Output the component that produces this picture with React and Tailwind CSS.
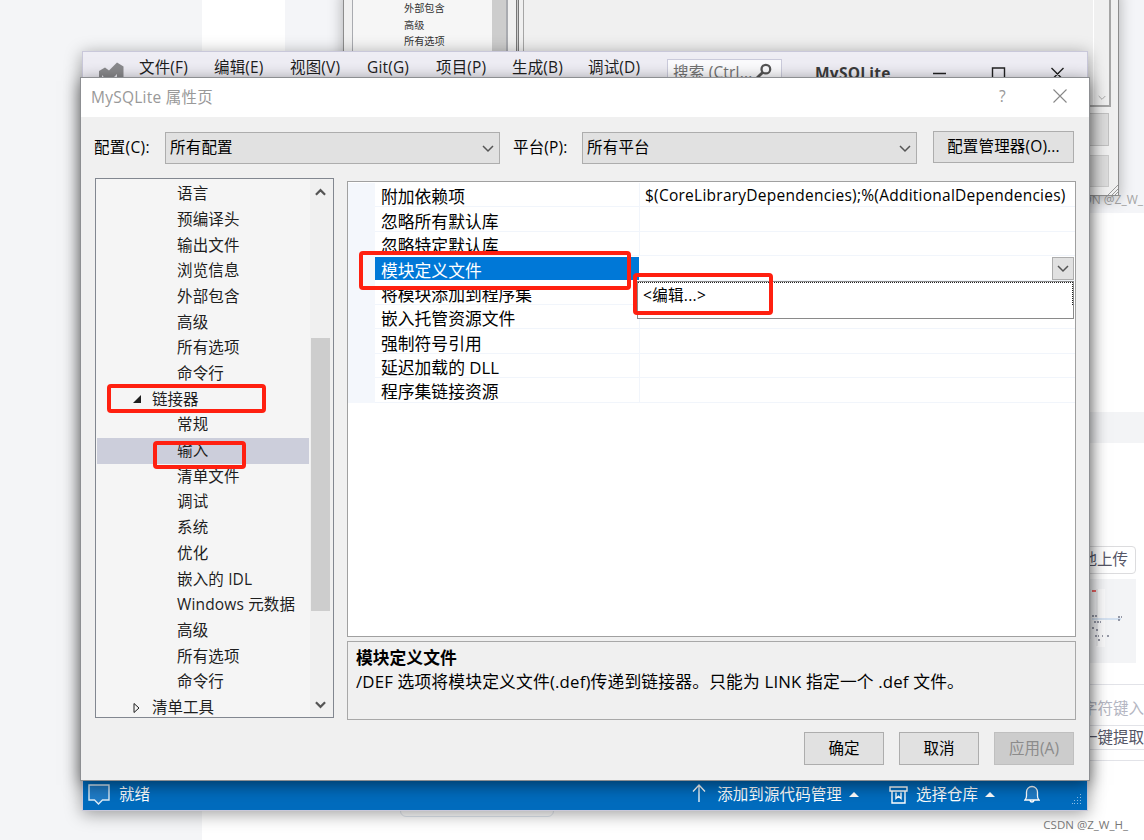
import React from "react";

const TREE = [
  "语言",
  "预编译头",
  "输出文件",
  "浏览信息",
  "外部包含",
  "高级",
  "所有选项",
  "命令行",
  { label: "链接器", open: true },
  "常规",
  { label: "输入", selected: true },
  "清单文件",
  "调试",
  "系统",
  "优化",
  "嵌入的 IDL",
  "Windows 元数据",
  "高级",
  "所有选项",
  "命令行",
  { label: "清单工具", open: false },
];

const PROPS = [
  ["附加依赖项", "$(CoreLibraryDependencies);%(AdditionalDependencies)"],
  ["忽略所有默认库", ""],
  ["忽略特定默认库", ""],
  ["模块定义文件", ""],
  ["将模块添加到程序集", ""],
  ["嵌入托管资源文件", ""],
  ["强制符号引用", ""],
  ["延迟加载的 DLL", ""],
  ["程序集链接资源", ""],
];

const MENU = [
  ["文件(F)", "w-[75px]"],
  ["编辑(E)", "w-[76px]"],
  ["视图(V)", "w-[77px]"],
  ["Git(G)", "w-[69px]"],
  ["项目(P)", "w-[76px]"],
  ["生成(B)", "w-[76px]"],
  ["调试(D)", "w-[79px]"],
];

const Chevron = ({ className, up, bold }) => (
  <svg
    viewBox="0 0 12 8"
    className={className}
    fill="none"
    stroke="currentColor"
    strokeWidth={bold ? 2.4 : 1.5}
  >
    <path d={up ? "M1 7l5-5 5 5" : "M1 1l5 5 5-5"} />
  </svg>
);

const Select = ({ children }) => (
  <div className="flex h-8 w-[335px] items-center justify-between border border-[#adadad] bg-[#e1e1e1] pr-[5px] pl-1">
    <span className="mt-px tracking-[0.2px]">{children}</span>
    <Chevron className="mt-0.5 h-2 w-3 text-[#555]" />
  </div>
);

const Button = ({ children, disabled }) => (
  <div
    className={
      disabled
        ? "flex h-[33px] w-20 items-center justify-center border border-[#bfbfbf] bg-[#cccccc] text-[#8b8b8b]"
        : "flex h-[33px] w-20 items-center justify-center border border-[#adadad] bg-[#e1e1e1]"
    }
  >
    {children}
  </div>
);

const Page = () => (
  <div className="absolute inset-0 bg-white">
    <div className="absolute inset-y-0 left-0 w-[202px] bg-[#f4f5f7]"></div>
    <div className="absolute top-0 right-0 h-[213px] w-[859px] bg-[#f4f5f8]"></div>
    <div className="absolute top-[412px] right-0 h-[31px] w-[80px] bg-[#f3f4f6]"></div>
    <div className="absolute top-[780px] left-[400px] h-[37px] w-[154px] rounded-md border border-[#dfe6ee]"></div>
    <div className="absolute top-[191px] right-[1px] h-[18px] text-[12px] leading-[18px] text-[#a5a5a5] whitespace-nowrap">
      CSDN @Z_W_
    </div>
    <div className="absolute top-[546px] right-2 flex h-7 w-24 items-center justify-end rounded-sm border border-[#dcdcde] pr-[7px] text-[15.5px] text-[#555666]">
      本地上传
    </div>
    <div className="absolute top-[579px] right-2 h-[84px] w-24 bg-[#f3f4f6]">
      <svg viewBox="0 0 48 84" className="absolute right-0 h-[84px] w-12">
        <rect x="9" y="10" width="8" height="58" fill="#fafafb" />
        <path d="M9 10v57M2 10v50" stroke="#dcdde2" />
        <path d="M4 40h29" stroke="#b4cdea" />
        <path
          d="M4 37h6M6 43h7M30 38h4M30 41h3M4 49h3M8 51h3M7 57h4M10 61h2M14 57h1M19 57h3"
          stroke="#77798a"
          strokeWidth="1.5"
          strokeDasharray="2 1"
        />
        <path d="M4 12h4" stroke="#e66" strokeWidth="2" />
      </svg>
    </div>
    <div className="absolute top-[684px] right-0 flex h-[77px] w-24 flex-col border-y border-[#e2e3e8] text-[15.5px] leading-[24px] whitespace-nowrap">
      <div className="flex h-[40px] items-center pt-[6px] pl-[34px] text-[#b4b6c2]">
        字符键入
      </div>
      <div className="flex h-[25px] items-center border-y border-[#e2e3e8] pb-[2px] pl-[34px] text-[#555666]">
        一键提取
      </div>
    </div>
  </div>
);

const BackDialog = () => (
  <div className="absolute -top-3 left-[343px] h-[208px] w-[776px] border border-[#8c8c8c] bg-[#f0f0f0] shadow-[0_3px_14px_rgba(0,0,0,0.3)]">
    <div className="flex h-[118px]">
      <div className="ml-2 flex w-[156px] border-r-2 border-l border-[#a9abb0] bg-[#f6f6f6]">
        <div className="flex flex-1 flex-col pt-[11px] pl-[51px] text-[10.2px] leading-[16.7px] text-[#333]">
          <span>外部包含</span>
          <span>高级</span>
          <span>所有选项</span>
        </div>
        <div className="w-3.5 bg-[#cdcdcd]"></div>
      </div>
      <div className="ml-2 w-[3px] border-x border-[#777] bg-[#ccc]"></div>
      <div className="mr-[7px] ml-1 flex flex-1 justify-end border-r-2 border-b-2 border-l border-[#a5a5a5]">
        <div className="flex w-4 items-end justify-center border-l border-white pb-1 text-[#aaa]">
          <Chevron className="h-[6px] w-2" />
        </div>
      </div>
    </div>
    <div className="mt-[6px] mr-[9px] ml-auto h-[33px] w-20 border border-[#c0c0c0] bg-[#dcdcdc]"></div>
    <div className="mt-[9px] mr-[9px] ml-auto h-8 w-20 border border-[#cacaca] bg-[#dcdcdc]"></div>
    <svg
      viewBox="0 0 10 10"
      className="absolute right-0 bottom-0 size-[10px]"
      stroke="#999"
    >
      <path d="M0 10L10 0M4 10l6-6M7 10l3-3" />
    </svg>
  </div>
);

const VsWindow = () => (
  <div className="absolute top-[51px] left-[82px] flex h-[760px] w-[1006px] flex-col justify-between border border-[#c9c8da] bg-[#eeedf4] shadow-[0_3px_16px_rgba(0,0,0,0.38)]">
    <div className="flex h-10 text-[15.5px] text-[#1e1e1e]">
      <svg viewBox="0 0 26 26" className="mt-[10px] ml-[15px] size-[26px]">
        <path
          d="M1 9l6-3.500 4 3L19 .5l6.500 4V26H1zM4 13v9l4-4.500zM19 12L14 17l5 5z"
          fill="#8a8a8d"
          fillRule="evenodd"
        />
      </svg>
      <div className="ml-[15px] flex h-[31px] items-center tracking-[0.15px]">
        {MENU.map(([label, width]) => (
          <span key={label} className={width}>
            {label}
          </span>
        ))}
      </div>
      <div className="mt-[7px] flex h-8 w-[115px] shrink-0 border border-[#cbcbdc] bg-[#fbfbfd] pl-[5px] leading-[25px] text-[#717171]">
        <span className="tracking-[0.2px] whitespace-nowrap">搜索 (Ctrl...</span>
        <svg
          viewBox="0 0 18 18"
          className="mt-[3px] ml-0.5 size-[17px] shrink-0"
          fill="none"
          stroke="#555"
          strokeWidth="2.4"
        >
          <circle cx="11.5" cy="6.5" r="4.6" />
          <path d="M8 10l-7 7" strokeWidth="3" />
        </svg>
      </div>
      <span className="mt-[7px] ml-[33px] w-[78px] font-bold leading-[28px] tracking-[0.25px] text-[#3b3b3b]">
        MySQLite
      </span>
      <svg
        viewBox="0 0 132 16"
        className="mt-[14px] ml-10 h-4 w-[132px] shrink-0"
        fill="none"
        stroke="#222"
        strokeWidth="1.4"
      >
        <path d="M0 7.500h13M59.500 2h12v13h-12zM118.500 2l12 12M130.500 2l-12 12" />
      </svg>
    </div>
    <div className="flex h-[30px] items-center bg-[#006cbe] text-[15.5px] text-white">
      <svg
        viewBox="0 0 22 22"
        className="mb-0.5 ml-[5px] size-[22px]"
        fill="#1f7cc7"
        stroke="#dcebf7"
        strokeWidth="1.4"
      >
        <path d="M1 2h20v15h-6.500l-4 4-4-4H1z" />
      </svg>
      <span className="ml-[9px]">就绪</span>
      <svg
        viewBox="0 0 14 18"
        className="mb-1 ml-auto h-[18px] w-3.5"
        fill="none"
        stroke="#fff"
        strokeWidth="1.3"
      >
        <path d="M7 18V1M1 7.500L7 1l6 6.500" />
      </svg>
      <span className="ml-[11px] tracking-[0.1px]">添加到源代码管理</span>
      <svg viewBox="0 0 10 5" className="mb-0.5 ml-[7px] h-[5px] w-[10px]">
        <path d="M0 5l5-5 5 5z" fill="#fff" />
      </svg>
      <svg
        viewBox="0 0 19 18"
        className="mb-px ml-[30px] h-[18px] w-[19px]"
        fill="none"
        stroke="#fff"
        strokeWidth="1.4"
      >
        <path d="M1 1h17v4H1zM3 5v12h13V5M7 6.500v6l2.500-2.300 2.500 2.300v-6" />
      </svg>
      <span className="ml-[8px]">选择仓库</span>
      <svg viewBox="0 0 10 5" className="mb-0.5 ml-[7px] h-[5px] w-[10px]">
        <path d="M0 5l5-5 5 5z" fill="#fff" />
      </svg>
      <svg
        viewBox="0 0 16 18"
        className="mb-0.5 ml-[29px] h-[18px] w-4"
        fill="#1f7cc7"
        stroke="#fff"
        strokeWidth="1.3"
      >
        <path d="M1 15c1-1 1.500-2 1.500-4V7a5.500 5.500 0 0 1 11 0v4c0 2 .5 3 1.500 4zM6 15.500c.5 2 3.500 2 4 0" />
      </svg>
      <svg
        viewBox="0 0 10 10"
        className="mt-2 mr-[5px] ml-8 size-[10px]"
        fill="#8fc0e6"
      >
        <path d="M8 0h1v1H8zM5 3h1v1H5zM8 3h1v1H8zM2 6h1v1H2zM5 6h1v1H5zM8 6h1v1H8zM0 9h1v1H0zM2 9h1v1H2zM5 9h1v1H5zM8 9h1v1H8z" />
      </svg>
    </div>
  </div>
);

const TreeRow = ({ item }) => {
  const row = typeof item === "string" ? { label: item } : item;
  const group = row.open !== undefined;
  return (
    <div
      className={
        row.selected
          ? "flex h-[25.7px] shrink-0 items-center bg-[#cccedb]"
          : "flex h-[25.7px] shrink-0 items-center"
      }
    >
      {group && (
        <svg viewBox="0 0 10 12" className="ml-[35px] h-3 w-[10px]">
          {row.open ? (
            <path d="M9 2v8H1z" fill="#1e1e1e" />
          ) : (
            <path d="M2 1.500v9L7 6z" fill="none" stroke="#1e1e1e" />
          )}
        </svg>
      )}
      <span className={group ? "ml-[10px]" : "ml-20 tracking-[0.15px]"}>
        {row.label}
      </span>
    </div>
  );
};

const Tree = () => (
  <div className="flex h-[540px] w-[239px] border border-[#828790] bg-[#f5f5f5] pl-px text-[#1e1e1e]">
    <div className="flex h-[538px] flex-1 flex-col overflow-hidden pt-0.5 pr-px whitespace-nowrap">
      {TREE.map((item, i) => (
        <TreeRow key={i} item={item} />
      ))}
    </div>
    <div className="flex w-[23px] flex-col items-center bg-[#f0f0f0] pt-px pr-[3px] text-[#555]">
      <Chevron up bold className="mt-2 h-2 w-[11px]" />
      <div className="mt-[142px] h-[273px] w-[19px] bg-[#cdcdcd]"></div>
      <Chevron bold className="mt-auto mb-2 h-2 w-[11px]" />
    </div>
  </div>
);

const PropertyGrid = () => (
  <div className="relative h-[456px] w-[729px] border border-[#a0a0a0] bg-white pt-px text-[16.8px]">
    {PROPS.map(([name, value], i) => (
      <div key={name} className="flex h-[24.4px]">
        <div className="w-[27px] bg-[#f4f7fc]"></div>
        <div
          className={
            i === 3
              ? "mt-px flex h-[23px] w-[264px] items-center bg-[#0078d7] pt-1 pl-[6px] text-white"
              : "flex w-[265px] items-center border-r border-b border-[#f1f5fb] pt-[5px] pl-[6px]"
          }
        >
          <span className="leading-[24px] whitespace-nowrap">{name}</span>
        </div>
        <div className="flex flex-1 items-center border-b border-[#f1f5fb] pt-px pl-[5px]">
          <span className="text-[15.5px] leading-[24px] tracking-[0.25px] whitespace-nowrap">
            {value}
          </span>
          {i === 3 && (
            <div className="mr-px ml-auto flex h-[23px] w-[22px] items-center justify-center border border-[#adadad] bg-[#e1e1e1]">
              <Chevron className="mt-0.5 h-2 w-3 text-[#555]" />
            </div>
          )}
        </div>
      </div>
    ))}
    <div className="absolute top-[99px] right-px h-[38px] w-[437px] border border-[#8a8a8a] bg-white">
      <div className="h-[23px] border-t border-r border-dotted border-[#222] pl-[5px] text-[15.5px] leading-[25px] tracking-[0.3px]">
        &lt;编辑...&gt;
      </div>
    </div>
  </div>
);

const PropertyDialog = () => (
  <div className="absolute top-[77px] left-[80px] h-[704px] w-[1010px] border border-[#8d8f92] bg-[#f0f0f0] text-[15.5px] text-black shadow-[0_4px_16px_rgba(0,0,0,0.5)]">
    <div className="flex h-[39px] items-center bg-white pb-px pl-[10px] text-[#999]">
      <span className="mt-px tracking-[0.25px]">MySQLite 属性页</span>
      <span className="ml-auto w-[9px]">?</span>
      <svg
        viewBox="0 0 14 14"
        className="mr-[22px] mb-0.5 ml-[45px] size-[14px]"
        stroke="#888"
        strokeWidth="1.1"
      >
        <path d="M.5.5l13 13M13.500.5l-13 13" />
      </svg>
    </div>
    <div className="mt-[14px] flex h-[33px] items-center pl-[13px]">
      <span className="w-[71px] tracking-[0.3px]">配置(C):</span>
      <Select>所有配置</Select>
      <span className="ml-[13px] w-[69px] tracking-[0.15px]">平台(P):</span>
      <Select>所有平台</Select>
      <div className="mb-[2px] ml-4 flex h-8 w-[141px] items-center justify-center border border-[#adadad] bg-[#e1e1e1] tracking-[0.15px]">
        配置管理器(O)...
      </div>
    </div>
    <div className="mt-[14px] flex pl-[14px]">
      <Tree />
      <div className="mt-[3px] ml-[13px] flex flex-col gap-1">
        <PropertyGrid />
        <div className="h-[79px] w-[729px] border border-[#a8a8a8] pt-1 pl-2 text-[16.8px] leading-[24px]">
          <div className="font-bold">模块定义文件</div>
          <div className="tracking-[0.16px] whitespace-nowrap">
            /DEF 选项将模块定义文件(.def)传递到链接器。只能为 LINK 指定一个 .def
            文件。
          </div>
        </div>
      </div>
    </div>
    <div className="mt-[12px] flex justify-end gap-[15px] pr-[15px]">
      <Button>确定</Button>
      <Button>取消</Button>
      <Button disabled>应用(A)</Button>
    </div>
  </div>
);

export default function App() {
  return (
    <div className="relative h-[840px] w-[1144px] overflow-hidden font-['Open_Sans','Noto_Sans_CJK_SC',sans-serif]">
      <Page />
      <BackDialog />
      <VsWindow />
      <PropertyDialog />
      {/* red callout frames */}
      <div className="absolute top-[384px] left-[107px] h-[29px] w-[159px] rounded border-4 border-[#ff2010]"></div>
      <div className="absolute top-[441px] left-[153px] h-[28px] w-[93px] rounded border-4 border-[#ff2010]"></div>
      <div className="absolute top-[251px] left-[359px] h-[39px] w-[272px] rounded border-4 border-[#ff2010]"></div>
      <div className="absolute top-[273px] left-[633px] h-[42px] w-[140px] rounded border-4 border-[#ff2010]"></div>
      <div className="absolute right-[16px] bottom-[6px] text-[11.5px] leading-[18px] text-[#777]">
        CSDN @Z_W_H_
      </div>
    </div>
  );
}
